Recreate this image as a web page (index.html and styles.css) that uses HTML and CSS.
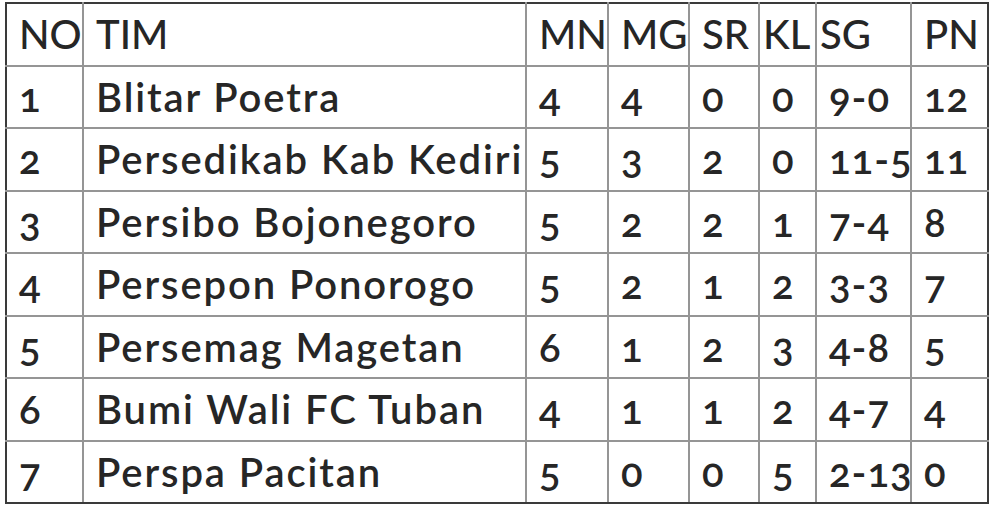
FILE: index.html
```html
<!DOCTYPE html>
<html>
<head>
<meta charset="utf-8">
<link rel="stylesheet" href="styles.css">
</head>
<body>
<table class="standings">
  <colgroup>
    <col class="c-no"><col class="c-tim"><col class="c-mn"><col class="c-mg"><col class="c-sr"><col class="c-kl"><col class="c-sg"><col class="c-pn">
  </colgroup>
  <thead>
    <tr><th>NO</th><th>TIM</th><th>MN</th><th>MG</th><th>SR</th><th class="tight">KL</th><th class="tight">SG</th><th>PN</th></tr>
  </thead>
  <tbody>
    <tr><td>1</td><td class="team">Blitar Poetra</td><td>4</td><td>4</td><td>0</td><td>0</td><td>9-0</td><td>12</td></tr>
    <tr><td>2</td><td class="team">Persedikab Kab Kediri</td><td>5</td><td>3</td><td>2</td><td>0</td><td>11-5</td><td>11</td></tr>
    <tr><td>3</td><td class="team">Persibo Bojonegoro</td><td>5</td><td>2</td><td>2</td><td>1</td><td>7-4</td><td>8</td></tr>
    <tr><td>4</td><td class="team">Persepon Ponorogo</td><td>5</td><td>2</td><td>1</td><td>2</td><td>3-3</td><td>7</td></tr>
    <tr><td>5</td><td class="team">Persemag Magetan</td><td>6</td><td>1</td><td>2</td><td>3</td><td>4-8</td><td>5</td></tr>
    <tr><td>6</td><td class="team">Bumi Wali FC Tuban</td><td>4</td><td>1</td><td>1</td><td>2</td><td>4-7</td><td>4</td></tr>
    <tr><td>7</td><td class="team">Perspa Pacitan</td><td>5</td><td>0</td><td>0</td><td>5</td><td>2-13</td><td>0</td></tr>
  </tbody>
</table>
</body>
</html>
```

FILE: styles.css
```css
html, body {
  margin: 0;
  padding: 0;
  background: #ffffff;
}
body {
  padding: 2px 0 0 5px;
}
.standings {
  border-collapse: collapse;
  table-layout: fixed;
  width: 984px;
  border: 2px solid #3a3a3a;
  font-family: Lato, "Liberation Sans", sans-serif;
  color: #262626;
  font-variant-numeric: oldstyle-nums;
  font-size: 40px;
  font-weight: 600;
}
.c-no { width: 77px; }
.c-tim { width: 443px; }
.c-mn { width: 82px; }
.c-mg { width: 81px; }
.c-sr { width: 70px; }
.c-kl { width: 57px; }
.c-sg { width: 95px; }
.c-pn { width: 77px; }
.standings tr {
  height: 62.5px;
}
.standings th,
.standings td {
  border: 2px solid #959595;
  text-align: left;
  padding: 0 0 0 12px;
  white-space: nowrap;
  overflow: visible;
  vertical-align: middle;
  line-height: 48px;
}
.standings th {
  font-weight: 500;
  letter-spacing: 0;
}
.standings th.tight {
  padding-left: 3px;
}
.standings td {
  letter-spacing: 1px;
}
.standings td:first-child {
  letter-spacing: 0;
}
.standings td.team {
  letter-spacing: 1.9px;
}
.standings tr > :first-child { border-left-color: #3a3a3a; }
.standings tr > :last-child { border-right-color: #3a3a3a; }
.standings thead th { border-top-color: #3a3a3a; }
.standings tbody tr:last-child td { border-bottom-color: #3a3a3a; }
```
